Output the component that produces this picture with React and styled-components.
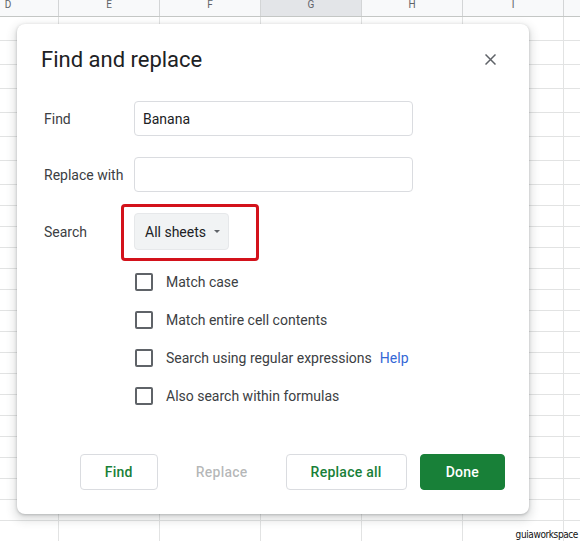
import React from "react";
import styled, { createGlobalStyle } from "styled-components";

const GlobalStyle = createGlobalStyle`
  html, body { margin: 0; padding: 0; background: #fff; }
  * { box-sizing: border-box; }
`;

const Sheet = styled.div`
  position: relative;
  width: 580px;
  height: 541px;
  overflow: hidden;
  background: #fff;
  font-family: Roboto, "Liberation Sans", sans-serif;
`;

const Grid = styled.div`
  display: flex;
  flex-direction: column;
  margin-left: -42px;
`;

const HeaderRow = styled.div`
  display: flex;
  height: 17px;
  background: #f8f9fa;
  border-bottom: 1px solid #c4c7c5;
`;

const HeaderCell = styled.div`
  flex: 0 0 101px;
  display: flex;
  justify-content: center;
  align-items: flex-start;
  border-right: 1px solid #d3d5d6;
  background: ${(p) => (p.$active ? "#e3e5e8" : "transparent")};
  font-size: 10px;
  line-height: 10px;
  color: #5f6368;
`;

const Row = styled.div`
  display: flex;
  height: ${(p) => p.$h}px;
`;

const Cell = styled.div`
  flex: 0 0 101px;
  border-right: 1px solid #e2e3e3;
  border-bottom: 1px solid #e2e3e3;
`;

const Dialog = styled.div`
  position: absolute;
  left: 17px;
  top: 24px;
  width: 512px;
  height: 490px;
  background: #fff;
  border-radius: 8px;
  box-shadow: 0 4px 8px 3px rgba(60, 64, 67, 0.15), 0 1px 3px rgba(60, 64, 67, 0.3);
  padding: 22px 24px 24px;
  display: flex;
  flex-direction: column;
`;

const DialogHeader = styled.div`
  display: flex;
  justify-content: space-between;
  align-items: center;
  height: 28px;
`;

const Title = styled.h2`
  margin: 0;
  font-family: Roboto, sans-serif;
  font-weight: 400;
  font-size: 22px;
  line-height: 28px;
  color: #202124;
`;

const CloseButton = styled.button`
  width: 30px;
  height: 28px;
  padding: 0;
  border: none;
  background: transparent;
  display: flex;
  align-items: center;
  justify-content: center;
  margin-top: -2px;
`;

const Form = styled.div`
  margin-top: 27px;
  display: grid;
  grid-template-columns: 93px 279px;
  row-gap: 21px;
  align-items: center;
`;

const Label = styled.label`
  padding-left: 3px;
  font-size: 14px;
  color: #3c4043;
`;

const TextInput = styled.input`
  height: 35px;
  width: 100%;
  border: 1px solid #dadce0;
  border-radius: 4px;
  padding: 0 8px;
  font-family: Roboto, sans-serif;
  font-size: 14px;
  color: #202124;
  outline: none;
`;

const Highlighted = styled.div`
  justify-self: start;
  position: relative;
  &::after {
    content: "";
    position: absolute;
    top: -9px;
    bottom: -11px;
    left: -13px;
    right: -30px;
    border: 3px solid #d3121b;
    border-radius: 4px;
    pointer-events: none;
  }
`;

const Dropdown = styled.button`
  display: inline-flex;
  align-items: center;
  gap: 8px;
  height: 37px;
  padding: 0 8px 0 10px;
  background: #f1f3f4;
  border: 1px solid #e6e8ea;
  border-radius: 4px;
  font-family: Roboto, sans-serif;
  font-size: 14px;
  color: #202124;
`;

const Caret = styled.span`
  width: 0;
  height: 0;
  border-left: 3.5px solid transparent;
  border-right: 3.5px solid transparent;
  border-top: 3.5px solid #5f6368;
`;

const Options = styled.div`
  margin-top: 13px;
  margin-left: 94px;
  display: flex;
  flex-direction: column;
`;

const OptionRow = styled.label`
  display: flex;
  align-items: center;
  gap: 13px;
  height: 38px;
  font-size: 14px;
  color: #3c4043;
`;

const Checkbox = styled.input`
  appearance: none;
  margin: 0;
  width: 18px;
  height: 18px;
  border: 2px solid #5f6368;
  border-radius: 2px;
  background: #fff;
`;

const HelpLink = styled.a`
  margin-left: -5px;
  color: #3367d6;
  text-decoration: none;
`;

const Footer = styled.div`
  margin-top: auto;
  display: flex;
  justify-content: flex-end;
  gap: 13px;
`;

const variants = {
  outlined: { bg: "#fff", border: "#dadce0", color: "#188038", pad: 24 },
  disabled: { bg: "transparent", border: "transparent", color: "rgba(60,64,67,0.38)", pad: 24 },
  filled: { bg: "#188038", border: "#188038", color: "#fff", pad: 25 },
};

const Button = styled.button`
  height: 36px;
  padding: 0 ${(p) => variants[p.$variant].pad}px;
  border-radius: 4px;
  border: 1px solid ${(p) => variants[p.$variant].border};
  background: ${(p) => variants[p.$variant].bg};
  color: ${(p) => variants[p.$variant].color};
  font-family: Roboto, sans-serif;
  font-weight: 500;
  font-size: 14px;
  letter-spacing: 0.25px;
`;

const Watermark = styled.div`
  position: absolute;
  right: 2px;
  bottom: 0;
  font-family: "Liberation Sans Narrow", "DejaVu Sans Condensed", Roboto, sans-serif;
  font-size: 10px;
  line-height: 12px;
  color: #111;
  letter-spacing: -0.4px;
`;

const columns = ["D", "E", "F", "G", "H", "I", ""];
const rowHeights = [...Array(7).fill(24), ...Array(17).fill(21)];

const options = [
  { text: "Match case" },
  { text: "Match entire cell contents" },
  { text: "Search using regular expressions", help: true },
  { text: "Also search within formulas" },
];

export default function App() {
  return (
    <>
      <GlobalStyle />
      <Sheet>
        <Grid>
          <HeaderRow>
            {columns.map((c, i) => (
              <HeaderCell key={i} $active={c === "G"}>
                {c}
              </HeaderCell>
            ))}
          </HeaderRow>
          {rowHeights.map((h, i) => (
            <Row key={i} $h={h}>
              {columns.map((c, j) => (
                <Cell key={j} />
              ))}
            </Row>
          ))}
        </Grid>

        <Dialog>
          <DialogHeader>
            <Title>Find and replace</Title>
            <CloseButton aria-label="Close">
              <svg width="11" height="11" viewBox="0 0 11 11">
                <path d="M0.5 0.5 L10.5 10.5 M10.5 0.5 L0.5 10.5" stroke="#5f6368" strokeWidth="1.5" />
              </svg>
            </CloseButton>
          </DialogHeader>

          <Form>
            <Label>Find</Label>
            <TextInput defaultValue="Banana" />
            <Label>Replace with</Label>
            <TextInput defaultValue="" />
            <Label>Search</Label>
            <Highlighted>
              <Dropdown>
                All sheets
                <Caret />
              </Dropdown>
            </Highlighted>
          </Form>

          <Options>
            {options.map((o) => (
              <OptionRow key={o.text}>
                <Checkbox type="checkbox" />
                <span>{o.text}</span>
                {o.help && <HelpLink href="#">Help</HelpLink>}
              </OptionRow>
            ))}
          </Options>

          <Footer>
            <Button $variant="outlined">Find</Button>
            <Button $variant="disabled">Replace</Button>
            <Button $variant="outlined">Replace all</Button>
            <Button $variant="filled">Done</Button>
          </Footer>
        </Dialog>

        <Watermark>guiaworkspace</Watermark>
      </Sheet>
    </>
  );
}
